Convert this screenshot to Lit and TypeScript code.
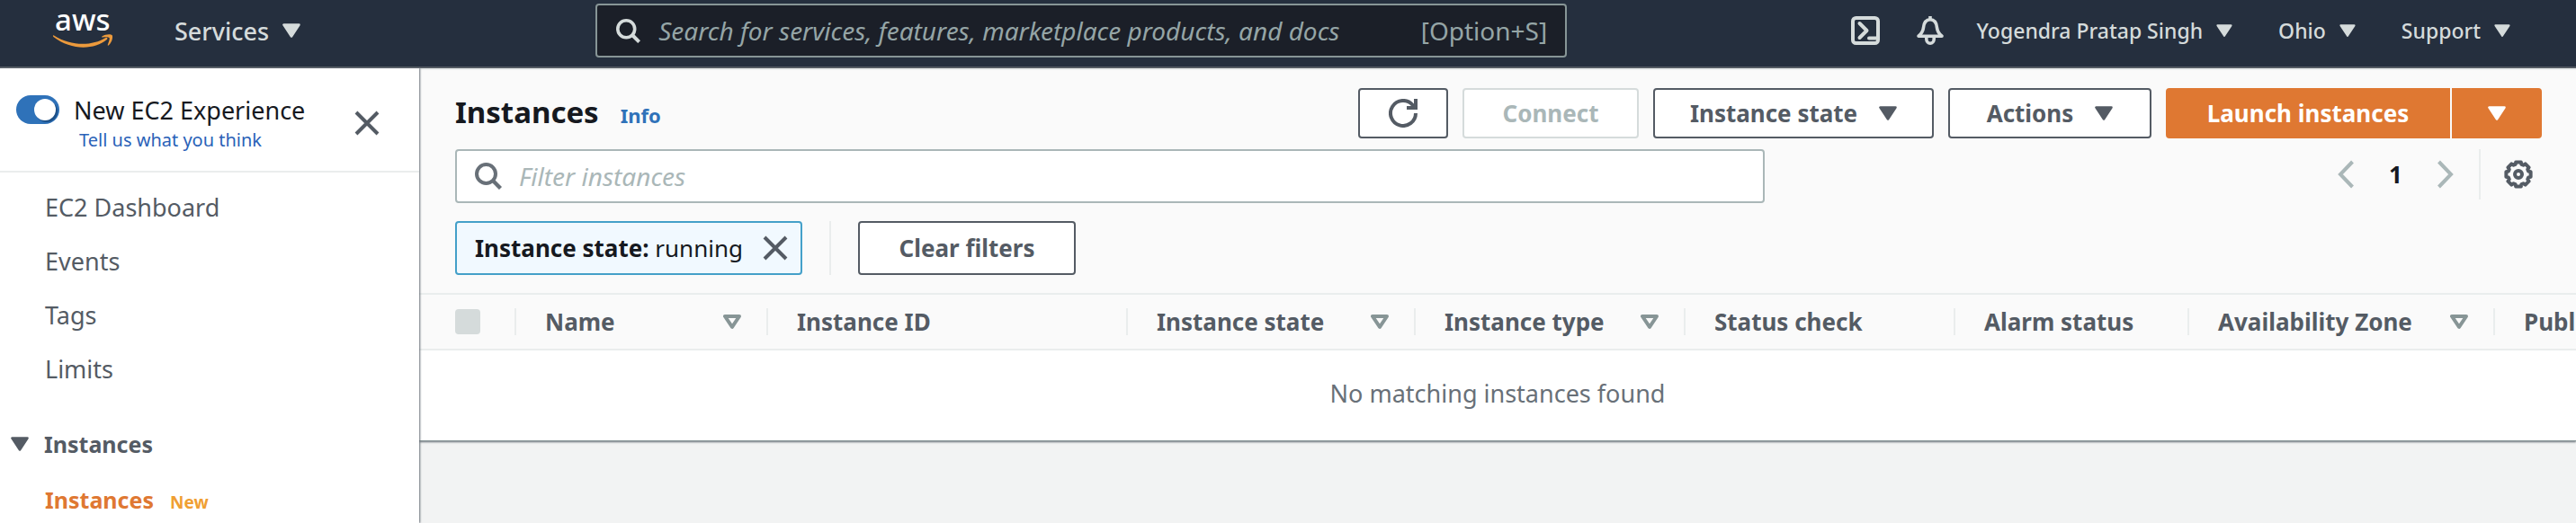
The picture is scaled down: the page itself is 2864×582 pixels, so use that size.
import { LitElement, html, svg, css, nothing } from "lit";
import { customElement, state } from "lit/decorators.js";

interface Column {
  label: string;
  width: number;
  sortable?: boolean;
}

const COLUMNS: Column[] = [
  { label: "Name", width: 280, sortable: true },
  { label: "Instance ID", width: 400 },
  { label: "Instance state", width: 320, sortable: true },
  { label: "Instance type", width: 300, sortable: true },
  { label: "Status check", width: 300 },
  { label: "Alarm status", width: 260 },
  { label: "Availability Zone", width: 340, sortable: true },
  { label: "Public IPv4 DNS", width: 300 },
];

const MAIN_LINKS = ["EC2 Dashboard", "Events", "Tags", "Limits"];
const ACCOUNT_MENUS = ["Yogendra Pratap Singh", "Ohio", "Support"];

const caret = (w = 20, h = 16) => html`
  <svg class="icon" width=${w} height=${h} viewBox="0 0 20 16" aria-hidden="true">
    <path d="M1.5 1.5h17L10 14.5z" fill="currentColor" stroke="currentColor" stroke-width="2.6" stroke-linejoin="round" />
  </svg>`;

const sortCaret = html`
  <svg class="icon" width="20" height="16" viewBox="0 0 20 16" aria-hidden="true">
    <path d="M2 2h16l-8 11.8z" fill="none" stroke="currentColor" stroke-width="4" stroke-linejoin="round" />
  </svg>`;

const magnifier = (size: number) => html`
  <svg class="icon" width=${size} height=${size} viewBox="0 0 30 30" aria-hidden="true">
    <circle cx="12.5" cy="12.5" r="10.5" fill="none" stroke="currentColor" stroke-width="4" />
    <path d="M20 20l8.5 8.5" stroke="currentColor" stroke-width="4.4" />
  </svg>`;

const cross = html`
  <svg class="icon" width="28" height="28" viewBox="0 0 28 28" aria-hidden="true">
    <path d="M2 2l24 24M26 2L2 26" stroke="currentColor" stroke-width="4" />
  </svg>`;

const chevron = (d: string) => html`
  <svg class="icon" width="18" height="32" viewBox="0 0 18 32" aria-hidden="true">
    <path d=${d} fill="none" stroke="currentColor" stroke-width="4" />
  </svg>`;

/** Closed scalloped outline with eight teeth, centred in a 32px box. */
function gearOutline(): string {
  const points: string[] = [];
  for (let i = 0; i < 8; i++) {
    const base = (i * Math.PI) / 4 - Math.PI / 2;
    for (const [offset, r] of [[-0.2, 13.9], [0.2, 13.9], [0.3, 11.6], [0.485, 11.6]]) {
      const a = base + offset;
      points.push(`${(16 + r * Math.cos(a)).toFixed(2)} ${(16 + r * Math.sin(a)).toFixed(2)}`);
    }
  }
  return `M${points.join("L")}Z`;
}

const gear = html`
  <svg class="icon" width="32" height="32" viewBox="0 0 32 32" aria-hidden="true">
    ${svg`<path d=${gearOutline()} fill="none" stroke="currentColor" stroke-width="4" stroke-linejoin="round" />`}
    <circle cx="16" cy="16" r="4" fill="none" stroke="currentColor" stroke-width="4" />
  </svg>`;

const shared = css`
  :host, * { box-sizing: border-box; }
  button, input { font: inherit; color: inherit; margin: 0; }
  button { cursor: pointer; }
  a { color: inherit; text-decoration: none; }
  .icon { display: block; flex: none; }
  .plain { display: flex; align-items: center; padding: 0; border: 0; background: none; white-space: nowrap; }
`;

@customElement("console-nav")
export class ConsoleNav extends LitElement {
  static styles = [shared, css`
    :host {
      display: flex;
      align-items: center;
      height: 76px;
      flex: none;
      padding: 0 73px 6px 59px;
      background: #252f3e;
      border-bottom: 2px solid #545b64;
      color: #d5dbdb;
    }
    .logo { flex: none; }
    .logo svg { display: block; overflow: visible; }
    .wordmark { font-size: 33px; font-weight: 500; fill: #fff; }
    .services { margin-left: 68px; gap: 15px; font-size: 27px; font-weight: 500; }
    .search {
      display: flex;
      align-items: center;
      flex: 0 1 1080px;
      height: 60px;
      margin: 0 auto 0 328px;
      padding: 0 20px 0 21px;
      background: #1b1f28;
      border: 2px solid #879596;
      border-radius: 4px;
    }
    .search input {
      flex: 1;
      min-width: 0;
      margin-left: 20px;
      padding: 0;
      border: 0;
      outline: 0;
      background: none;
      font-size: 28px;
    }
    .search input::placeholder { color: #95a5a6; font-style: italic; opacity: 1; }
    .hint { color: #95a5a6; font-size: 28px; }
    .tools { display: flex; align-items: center; gap: 51px; }
    .icons { display: flex; gap: 40px; margin-right: -15px; }
    .account { gap: 15px; font-size: 23px; font-weight: 500; }
  `];

  render() {
    return html`
      <a class="logo" href="#" aria-label="aws home">
        <svg width="67" height="42" viewBox="0 0 67 42">
          <text class="wordmark" x="2" y="21">aws</text>
          <path d="M1 26.500c19 12 42 12 57.500 2.500c1.500-.8 2.800.8 1.400 2C45 43 20 43 .4 28c-1-.9-.4-2.100.6-1.500z" fill="#ec9a3c" />
          <path d="M54.500 27.500c3-2.500 9.500-3 11-1.500s.2 8-3.600 11.300c-.8.700-1.500.2-1.100-.6c1-2.500 2.500-6.600 1.700-7.700s-5-.8-7.400-.5c-.9.100-1.300-.5-.6-1z" fill="#ec9a3c" />
        </svg>
      </a>
      <button class="plain services">Services ${caret()}</button>
      <label class="search">
        ${magnifier(27)}
        <input type="search" aria-label="Search" placeholder="Search for services, features, marketplace products, and docs" />
        <span class="hint">[Option+S]</span>
      </label>
      <div class="tools">
        <div class="icons">
          <button class="plain" aria-label="CloudShell">
            <svg class="icon" width="32" height="32" viewBox="0 0 32 32" fill="none" stroke="currentColor" stroke-width="4">
              <rect x="2" y="2" width="28" height="28" rx="3.500" />
              <path d="M9.500 8l8 8l-8 8" stroke-linecap="round" stroke-linejoin="round" />
              <path d="M20 24.500h9" stroke-linecap="round" />
            </svg>
          </button>
          <button class="plain" aria-label="Notifications">
            <svg class="icon" width="32" height="32" viewBox="0 0 32 32" fill="none" stroke="currentColor" stroke-width="3.600">
              <path d="M16 0v4" />
              <path d="M3 22.200h26c-3.500-3-5-5-5.400-9C23 7 20 3.800 16 3.800S9 7 8.400 13.200c-.4 4-1.900 6-5.400 9z" stroke-linejoin="round" />
              <path d="M11.800 23v2.500a4.200 4.700 0 0 0 8.400 0V23" />
            </svg>
          </button>
        </div>
        ${ACCOUNT_MENUS.map((name) => html`<button class="plain account">${name} ${caret(18, 14)}</button>`)}
      </div>
    `;
  }
}

@customElement("console-sidebar")
export class ConsoleSidebar extends LitElement {
  @state() private modern = true;

  static styles = [shared, css`
    :host {
      display: block;
      width: 466px;
      flex: none;
      overflow: hidden;
      background: #fff;
      color: #545b64;
      font-size: 27px;
      z-index: 1;
      box-shadow: 1px 0 2px #687078;
    }
    .head {
      display: flex;
      align-items: center;
      justify-content: space-between;
      padding: 28px 44px 20px 18px;
      border-bottom: 2px solid #eaeded;
    }
    .choice { display: flex; align-items: center; height: 36px; gap: 16px; color: #16191f; white-space: nowrap; }
    .choice input {
      appearance: none;
      display: flex;
      align-items: center;
      justify-content: flex-end;
      width: 48px;
      height: 32px;
      padding: 0 4px;
      border-radius: 16px;
      background: #2f72b9;
    }
    .choice input::before {
      content: "";
      width: 24px;
      height: 24px;
      border-radius: 50%;
      background: #fff;
      box-shadow: 2px 2px 1px #1c4f86;
    }
    .choice input:not(:checked) { justify-content: flex-start; background: #879596; }
    .feedback { display: block; margin: 2px 0 0 70px; font-size: 20px; line-height: 28px; color: #2a62b8; }
    ul { margin: 0; padding: 0; list-style: none; }
    .links { padding-top: 8px; }
    li { display: flex; align-items: center; gap: 18px; height: 60px; padding-left: 50px; }
    .section { height: 60px; margin: 24px 0 2px; padding-left: 12px; gap: 17px; width: 100%; font-size: 25px; font-weight: 700; }
    .current { color: #df7832; font-size: 25px; font-weight: 700; }
    .badge { padding-top: 5px; color: #f09f33; font-size: 19px; font-weight: 700; }
  `];

  render() {
    return html`
      <div class="head">
        <div>
          <label class="choice">
            <input type="checkbox" role="switch" .checked=${this.modern}
              @change=${(e: Event) => (this.modern = (e.target as HTMLInputElement).checked)} />
            New EC2 Experience
          </label>
          <a class="feedback" href="#">Tell us what you think</a>
        </div>
        <button class="plain" aria-label="Close navigation">${cross}</button>
      </div>
      <ul class="links">
        ${MAIN_LINKS.map((t) => html`<li><a href="#">${t}</a></li>`)}
      </ul>
      <button class="plain section" aria-expanded="true">${caret()} Instances</button>
      <ul>
        <li><a class="current" href="#" aria-current="page">Instances</a><span class="badge">New</span></li>
      </ul>
    `;
  }
}

@customElement("instances-panel")
export class InstancesPanel extends LitElement {
  static styles = [shared, css`
    :host {
      display: block;
      background: #fff;
      border-top: 2px solid #eaeded;
      box-shadow: 0 1px 2px #687078;
      border-bottom: 1px solid #879596;
      color: #545b64;
      font-size: 26px;
      overflow: hidden;
    }
    .toolbar { padding: 20px 38px 20px 40px; background: #fafafa; }
    .row { display: flex; align-items: center; }
    h1 { flex: 1; display: flex; align-items: baseline; gap: 24px; margin: 0; font-size: 33px; line-height: 48px; color: #16191f; }
    .info { font-size: 22px; color: #2f72b9; }
    .actions { display: flex; gap: 16px; }
    .btn {
      display: flex;
      align-items: center;
      justify-content: center;
      gap: 24px;
      height: 56px;
      padding: 0 36px;
      border: 2px solid #545b64;
      border-radius: 4px;
      background: #fff;
      font-weight: 700;
      white-space: nowrap;
    }
    .refresh { width: 100px; padding: 0; }
    .connect { min-width: 196px; }
    .state { min-width: 312px; }
    .more { min-width: 226px; }
    .btn:disabled { color: #aab7b8; border-color: #d5dbdb; }
    .split { display: flex; gap: 2px; }
    .primary { border-color: #df7832; background: #df7832; color: #fff; }
    .launch { min-width: 316px; border-radius: 4px 0 0 4px; }
    .drop { width: 100px; padding: 0; border-radius: 0 4px 4px 0; }
    .filters { display: grid; grid-template-columns: 182fr 108fr; margin-top: 12px; }
    .filter {
      display: flex;
      align-items: center;
      gap: 19px;
      height: 60px;
      padding: 0 20px;
      border: 2px solid #aab7b8;
      border-radius: 4px;
      background: #fff;
      color: #687078;
    }
    .filter input { flex: 1; min-width: 0; padding: 0; border: 0; outline: 0; background: none; font-size: 28px; }
    .filter input::placeholder { color: #aab7b8; font-style: italic; opacity: 1; }
    .paging { display: flex; align-items: center; justify-content: flex-end; padding-right: 10px; height: 56px; }
    .paging .plain { color: #aab7b8; }
    .page { width: 93px; text-align: center; color: #16191f; font-weight: 700; }
    .rule { width: 2px; align-self: stretch; background: #eaeded; }
    .paging .rule { margin: 0 26px 0 28px; }
    .paging .prefs { color: #545b64; }
    .tokens { margin-top: 20px; height: 60px; }
    .token {
      display: flex;
      align-items: center;
      justify-content: space-between;
      width: 386px;
      height: 60px;
      padding: 0 14px 0 20px;
      border: 2px solid #44a0c9;
      border-radius: 4px;
      background: #f1f9ff;
      color: #16191f;
      white-space: nowrap;
    }
    .token .plain { color: #545b64; }
    .tokens .rule { margin: 0 30px; }
    .clear { height: 60px; min-width: 242px; }
    .scroll { overflow: hidden; background: #fafafa; border-top: 2px solid #eaeded; border-bottom: 2px solid #eaeded; }
    table { width: max-content; table-layout: fixed; border-collapse: collapse; }
    th { height: 60px; padding: 0; text-align: left; font-weight: 700; }
    .check { width: 106px; padding-left: 40px; }
    .check input { appearance: none; display: block; width: 28px; height: 28px; margin: 0; border-radius: 4px; background: #d5dbdb; }
    .cell {
      display: flex;
      align-items: center;
      justify-content: space-between;
      height: 30px;
      padding: 0 28px 0 32px;
      border-left: 2px solid #eaeded;
      white-space: nowrap;
    }
    .cell .plain { color: #879596; }
    .empty { padding: 20px 0 24px; text-align: center; line-height: 56px; font-size: 27px; color: #687078; }
  `];

  render() {
    return html`
      <div class="toolbar">
        <div class="row">
          <h1>Instances <a class="info" href="#">Info</a></h1>
          <div class="actions">
            <button class="btn refresh" aria-label="Refresh">
              <svg class="icon" width="32" height="32" viewBox="0 0 32 32" fill="none" stroke="currentColor" stroke-width="4">
                <path d="M30 16A14 14 0 1 1 26.500 6.700L29 10" />
                <path d="M30 0v10H20" />
              </svg>
            </button>
            <button class="btn connect" disabled>Connect</button>
            <button class="btn state">Instance state ${caret()}</button>
            <button class="btn more">Actions ${caret()}</button>
            <div class="split">
              <button class="btn primary launch">Launch instances</button>
              <button class="btn primary drop" aria-label="More launch options">${caret()}</button>
            </div>
          </div>
        </div>
        <div class="filters">
          <label class="filter">
            ${magnifier(30)}
            <input type="text" aria-label="Filter instances" placeholder="Filter instances" />
          </label>
          <div class="paging">
            <button class="plain" aria-label="Previous page">${chevron("M16.500 2L3 16l13.500 14")}</button>
            <span class="page">1</span>
            <button class="plain" aria-label="Next page">${chevron("M1.500 2L15 16L1.500 30")}</button>
            <span class="rule"></span>
            <button class="plain prefs" aria-label="Preferences">${gear}</button>
          </div>
        </div>
        <div class="row tokens">
          <div class="token">
            <span><b>Instance state:</b> running</span>
            <button class="plain" aria-label="Remove filter">${cross}</button>
          </div>
          <span class="rule"></span>
          <button class="btn clear">Clear filters</button>
        </div>
      </div>
      <div class="scroll">
        <table>
          <thead>
            <tr>
              <th class="check"><input type="checkbox" aria-label="Select all instances" disabled /></th>
              ${COLUMNS.map((c) => html`
                <th style="width:${c.width}px">
                  <div class="cell">
                    <span>${c.label}</span>
                    ${c.sortable ? html`<button class="plain" aria-label="Sort by ${c.label}">${sortCaret}</button>` : nothing}
                  </div>
                </th>`)}
            </tr>
          </thead>
        </table>
      </div>
      <div class="empty">No matching instances found</div>
    `;
  }
}

@customElement("app-root")
export class AppRoot extends LitElement {
  static styles = css`
    :host {
      display: flex;
      flex-direction: column;
      height: 100vh;
      overflow: hidden;
      background: #f2f3f3;
      font-family: "Noto Sans", "Open Sans", sans-serif;
    }
    .body { display: flex; flex: 1; min-height: 0; }
    main { flex: 1; min-width: 0; }
  `;

  render() {
    return html`
      <console-nav></console-nav>
      <div class="body">
        <console-sidebar></console-sidebar>
        <main><instances-panel></instances-panel></main>
      </div>
    `;
  }
}
